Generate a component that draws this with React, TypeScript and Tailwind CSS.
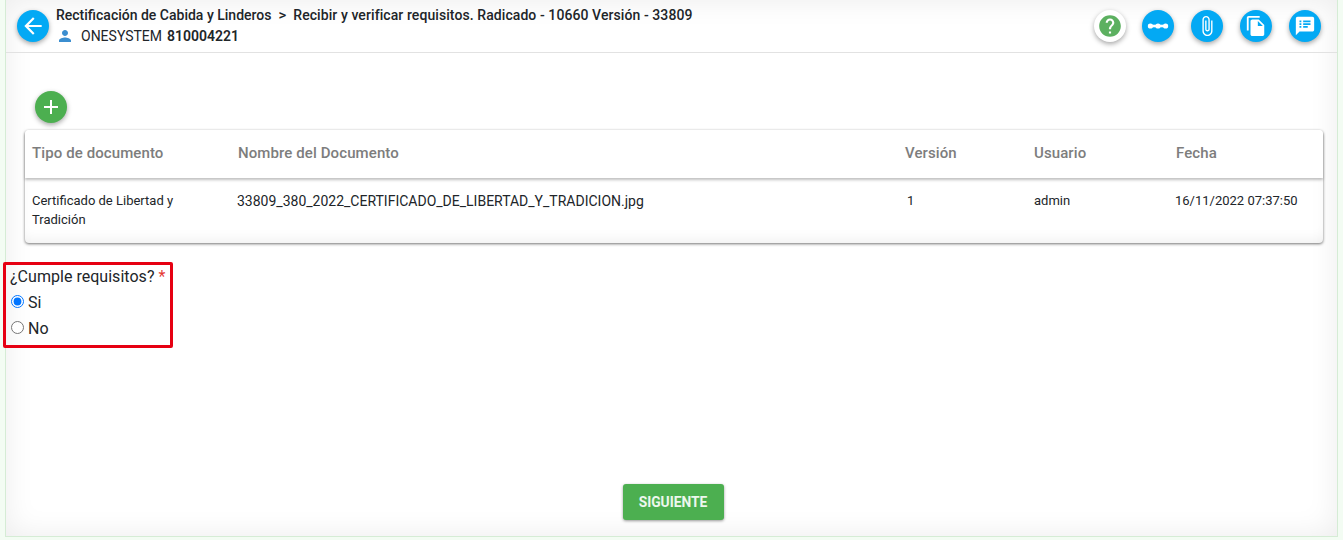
import React from 'react';

const roboto = { fontFamily: 'Roboto, sans-serif' };

const Icon = ({ d, size = 20, className = 'fill-white' }: { d: string; size?: number; className?: string }) => (
  <svg viewBox="0 0 24 24" width={size} height={size} className={className}>
    <path d={d} />
  </svg>
);

const paths = {
  back: 'M20 11H7.83l5.59-5.59L12 4l-8 8 8 8 1.41-1.41L7.83 13H20v-2z',
  person: 'M12 12c2.21 0 4-1.79 4-4s-1.79-4-4-4-4 1.79-4 4 1.79 4 4 4zm0 2c-2.67 0-8 1.34-8 4v2h16v-2c0-2.66-5.33-4-8-4z',
  add: 'M19 13h-6v6h-2v-6H5v-2h6V5h2v6h6v2z',
  help: 'M12 2C6.48 2 2 6.48 2 12s4.48 10 10 10 10-4.48 10-10S17.52 2 12 2zm1 17h-2v-2h2v2zm2.07-7.75l-.9.92C13.45 12.9 13 13.5 13 15h-2v-.5c0-1.1.45-2.1 1.17-2.83l1.24-1.26c.37-.36.59-.86.59-1.41 0-1.1-.9-2-2-2s-2 .9-2 2H8c0-2.21 1.79-4 4-4s4 1.79 4 4c0 .88-.36 1.68-.93 2.25z',
  attach: 'M16.5 6v11.5c0 2.21-1.79 4-4 4s-4-1.79-4-4V5c0-1.38 1.12-2.5 2.5-2.5s2.5 1.12 2.5 2.5v10.5c0 .55-.45 1-1 1s-1-.45-1-1V6H10v9.5c0 1.38 1.12 2.5 2.5 2.5s2.5-1.12 2.5-2.5V5c0-2.21-1.79-4-4-4S7 2.79 7 5v12.5c0 3.04 2.46 5.5 5.5 5.5s5.5-2.46 5.5-5.5V6h-1.5z',
  copy: 'M16 1H4c-1.1 0-2 .9-2 2v14h2V3h12V1zm-1 4l6 6v10c0 1.1-.9 2-2 2H7.99C6.89 23 6 22.1 6 21l.01-14c0-1.1.89-2 1.99-2h7zm-1 7h5.5L14 6.5V12z',
  notes: 'M20 2H4c-1.1 0-1.99.9-1.99 2L2 22l4-4h14c1.1 0 2-.9 2-2V4c0-1.1-.9-2-2-2zM8 14H6v-2h2v2zm0-3H6V9h2v2zm0-3H6V6h2v2zm7 6h-5v-2h5v2zm3-3h-8V9h8v2zm0-3h-8V6h8v2z',
};

const fab = 'flex h-8 w-8 shrink-0 items-center justify-center rounded-full shadow-[0_2px_5px_rgba(0,0,0,0.35)]';

const columns = 'grid grid-cols-[206px_667px_129px_142px_1fr]';

export default function App() {
  return (
    <div style={roboto} className="h-[540px] w-[1343px] overflow-hidden bg-[#f3fcf3]">
      <div className="mx-[5px] flex h-[537px] flex-col border-x border-b border-[#d5ecd5] bg-white shadow-[inset_0_0_30px_rgba(0,0,0,0.08)]">
        <header className="flex h-[53px] shrink-0 items-center border-b border-[#e2e2e2] pl-[11px] pr-[16px]">
          <button className={`${fab} bg-[#03a9f4]`}>
            <Icon d={paths.back} size={26} />
          </button>
          <div className="ml-[7px] flex flex-col self-start pt-[6px]">
            <div className="flex items-center text-[14px] font-medium leading-[18px] text-[#212529]">
              <span>Rectificación de Cabida y Linderos</span>
              <span className="mx-[7px] text-[15px]">&gt;</span>
              <span className="tracking-[0.08px]">Recibir y verificar requisitos. Radicado - 10660 Versión - 33809</span>
            </div>
            <div className="mt-[3px] flex items-center text-[14px] leading-[18px] text-[#212529]">
              <Icon d={paths.person} size={18} className="fill-[#3b8ed0]" />
              <span className="ml-[7px]">ONESYSTEM</span>
              <span className="ml-[5px] font-semibold">810004221</span>
            </div>
          </div>
          <div className="ml-auto flex items-center gap-[17px]">
            <button className={`${fab} mr-[-1px] bg-white`}>
              <Icon d={paths.help} size={26} className="fill-[#5cb060]" />
            </button>
            <button className={`${fab} bg-[#03a9f4]`}>
              <svg viewBox="0 0 24 24" width={26} height={26} className="fill-white">
                <rect x="3" y="10.8" width="18" height="2.4" />
                <circle cx="5" cy="12" r="2.4" />
                <circle cx="12" cy="12" r="2.4" />
                <circle cx="19" cy="12" r="2.4" />
              </svg>
            </button>
            <button className={`${fab} bg-[#03a9f4]`}>
              <Icon d={paths.attach} size={22} />
            </button>
            <button className={`${fab} bg-[#03a9f4]`}>
              <Icon d={paths.copy} size={22} />
            </button>
            <button className={`${fab} bg-[#03a9f4]`}>
              <Icon d={paths.notes} size={22} />
            </button>
          </div>
        </header>

        <main className="flex flex-1 flex-col">
          <button className={`${fab} ml-[29px] mt-[38px] bg-[#4caf50]`}>
            <Icon d={paths.add} size={24} />
          </button>

          <div className="ml-[19px] mr-[14px] mt-[7px] h-[113px] rounded-[4px] shadow-[0_1px_3px_rgba(0,0,0,0.55)]">
            <div className={`${columns} h-[48px] items-center rounded-t-[4px] bg-white pb-[2px] pl-[7px] text-[15px] font-medium tracking-[0.1px] text-[#7d7d7d] shadow-[0_2px_3px_rgba(0,0,0,0.25)]`}>
              <span>Tipo de documento</span>
              <span>Nombre del Documento</span>
              <span>Versión</span>
              <span>Usuario</span>
              <span>Fecha</span>
            </div>
            <div className={`${columns} h-[65px] rounded-b-[4px] pl-[7px] pt-[13px] text-[13px] leading-[19px] text-[#212529] shadow-[inset_0_-10px_14px_-8px_rgba(0,0,0,0.07)]`}>
              <span className="w-[170px]">Certificado de Libertad y Tradición</span>
              <span className="-ml-px pt-px text-[14px] leading-[18px]">33809_380_2022_CERTIFICADO_DE_LIBERTAD_Y_TRADICION.jpg</span>
              <span className="ml-[2px]">1</span>
              <span>admin</span>
              <span className="-ml-px">16/11/2022 07:37:50</span>
            </div>
          </div>

          <div className="-ml-[3px] mt-[19px] h-[86px] w-[170px] rounded-[2px] border-[3px] border-[#e60012] pl-[4px] text-[16px] text-[#212529]">
            <div className="leading-[24px] tracking-[0.03px]">
              ¿Cumple requisitos? <span className="text-[#e53935]">*</span>
            </div>
            <label className="mt-[1px] flex h-[26px] items-center gap-[4px]">
              <input type="radio" name="cumple" defaultChecked className="mb-[4px] ml-px mr-0 mt-0 h-[13px] w-[13px] accent-[#0075ff]" />
              Si
            </label>
            <label className="flex h-[26px] items-center gap-[4px]">
              <input type="radio" name="cumple" className="mb-[4px] ml-px mr-0 mt-0 h-[13px] w-[13px]" />
              No
            </label>
          </div>

          <div className="mt-[136px] flex justify-center">
            <button className="ml-[3px] h-[36px] w-[101px] rounded-[3px] bg-[#4caf50] text-[13.8px] font-bold text-white/90 shadow-[0_1px_3px_rgba(0,0,0,0.4)]">
              SIGUIENTE
            </button>
          </div>
        </main>
      </div>
    </div>
  );
}
